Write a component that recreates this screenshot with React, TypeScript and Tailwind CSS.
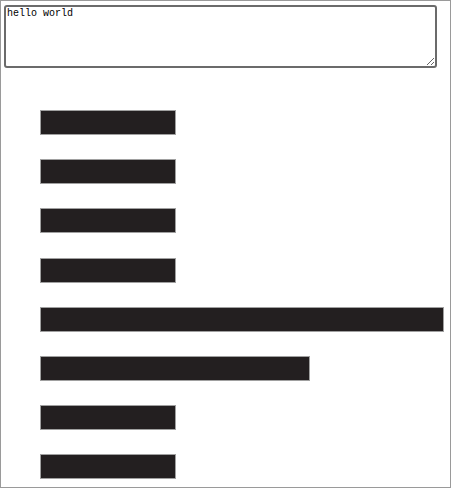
const bars = [136, 136, 136, 136, 404, 270, 136, 136];

export default function App() {
  return (
    <div className="w-[451px] h-[488px] border border-[#9a9a9a] bg-white overflow-hidden">
      <div className="ml-[3px] mt-[4px]">
        <textarea
          readOnly
          defaultValue="hello world"
          className="block w-[433px] h-[63px] border-2 border-[#6b6b6b] rounded-[3px] p-[1px] text-[10px] leading-[12px] text-black outline-none"
          style={{ fontFamily: '"Liberation Mono", "Courier New", monospace' }}
        />
      </div>

      <div className="flex flex-col gap-[24.2px] pl-[39px] pt-[42px]">
        {bars.map((w, i) => (
          <div
            key={i}
            className="h-[25px] bg-[#231f20] border border-[#a0a0a0]"
            style={{ width: w }}
          />
        ))}
      </div>
    </div>
  );
}
